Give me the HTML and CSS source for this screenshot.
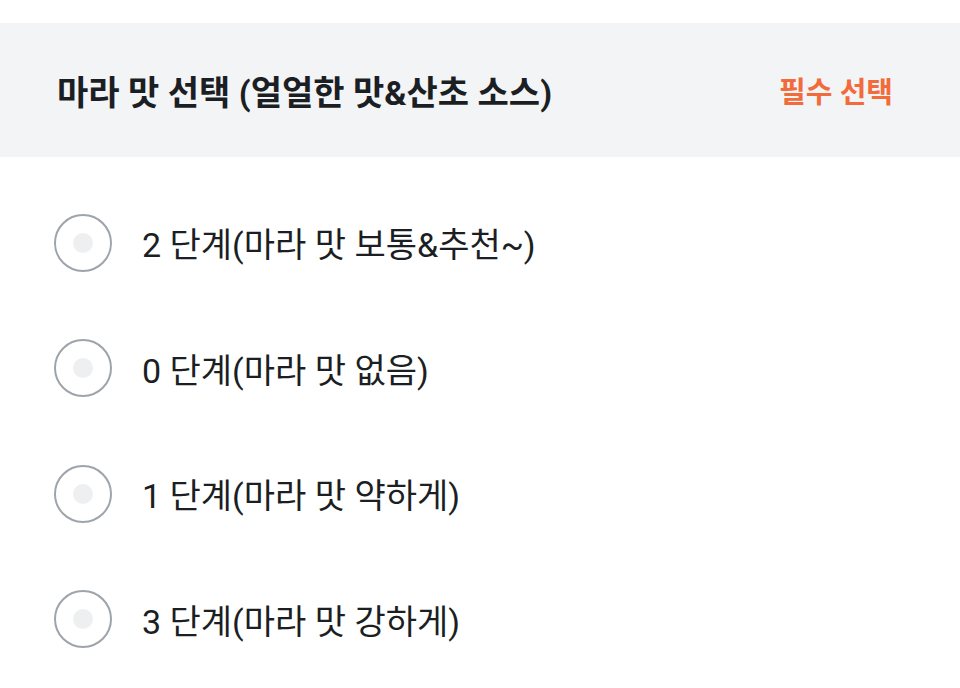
FILE: index.html
```html
<!DOCTYPE html>
<html lang="ko">
<head>
  <meta charset="UTF-8">
  <meta name="viewport" content="width=device-width, initial-scale=1.0">
  <title>마라 맛 선택</title>
  <link rel="stylesheet" href="styles.css">
</head>
<body>
  <div class="option-group">
    <div class="group-header">
      <h2 class="group-title">마라 맛 선택 (얼얼한 맛&amp;산초 소스)</h2>
      <span class="required">필수 선택</span>
    </div>
    <ul class="option-list">
      <li class="option">
        <span class="radio"><span class="dot"></span></span>
        <span class="label">2 단계(마라 맛 보통&amp;추천~)</span>
      </li>
      <li class="option">
        <span class="radio"><span class="dot"></span></span>
        <span class="label">0 단계(마라 맛 없음)</span>
      </li>
      <li class="option">
        <span class="radio"><span class="dot"></span></span>
        <span class="label">1 단계(마라 맛 약하게)</span>
      </li>
      <li class="option">
        <span class="radio"><span class="dot"></span></span>
        <span class="label">3 단계(마라 맛 강하게)</span>
      </li>
    </ul>
  </div>
</body>
</html>
```

FILE: styles.css
```css
* {
  margin: 0;
  padding: 0;
  box-sizing: border-box;
}

body {
  background-color: #fff;
  color: #1b1f24;
  font-family: Roboto, 'Noto Sans CJK KR', sans-serif;
}

.option-group {
  padding-top: 23px;
}

.group-header {
  height: 134px;
  padding: 0 67px 0 57px;
  background-color: #f3f4f6;
  display: flex;
  justify-content: space-between;
  align-items: center;
}

.group-title {
  font-size: 34px;
  font-weight: 700;
  color: #1b1f24;
}

.required {
  font-size: 29px;
  font-weight: 700;
  color: #f26b3a;
}

.option-list {
  list-style: none;
  padding: 23px 0 0 54px;
}

.option {
  height: 125.5px;
  display: flex;
  align-items: center;
  gap: 30px;
}

.radio {
  width: 58px;
  height: 58px;
  border: 2px solid #9ea4ab;
  border-radius: 50%;
  display: flex;
  justify-content: center;
  align-items: center;
}

.radio .dot {
  width: 20px;
  height: 20px;
  border-radius: 50%;
  background-color: #eeeff1;
}

.label {
  font-size: 34px;
  font-weight: 400;
  color: #1b1f24;
}
```
